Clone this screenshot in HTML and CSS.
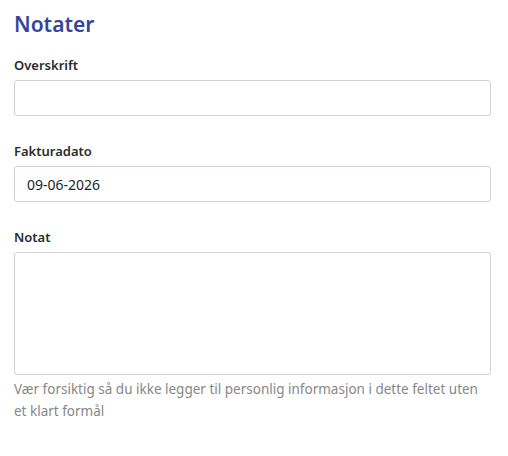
FILE: index.html
```html
<!DOCTYPE html>
<html lang="no">
<head>
    <meta charset="UTF-8">
    <meta name="viewport" content="width=device-width, initial-scale=1.0">
    <title>Notater</title>
    <link rel="stylesheet" href="styles.css">
</head>
<body>
    <div class="container">
        <h1>Notater</h1>
        <form class="notes-form">
            <div class="field">
                <label for="overskrift">Overskrift</label>
                <input type="text" id="overskrift" name="overskrift">
            </div>
            <div class="field">
                <label for="fakturadato">Fakturadato</label>
                <input type="text" id="fakturadato" name="fakturadato" value="09-06-2026">
            </div>
            <div class="field">
                <label for="notat">Notat</label>
                <textarea id="notat" name="notat"></textarea>
                <p class="hint">Vær forsiktig så du ikke legger til personlig informasjon i dette feltet uten et klart formål</p>
            </div>
        </form>
    </div>
</body>
</html>
```

FILE: styles.css
```css
body {
    font-family: "Noto Sans", "Open Sans", sans-serif;
    background-color: #fff;
    color: #212529;
    margin: 0;
    padding: 0;
}
.container {
    padding: 9px 17px 0 14px;
}
h1 {
    margin: 0 0 17px;
    font-size: 21px;
    font-weight: 600;
    line-height: 30px;
    color: #34469a;
}
.field {
    margin-bottom: 26px;
}
label {
    display: block;
    margin-bottom: 6px;
    font-size: 13px;
    font-weight: 600;
    line-height: 18px;
    color: #2b2b2b;
}
input,
textarea {
    display: block;
    box-sizing: border-box;
    width: 100%;
    padding: 6px 12px;
    border: 1px solid #cfd1d8;
    border-radius: 3px;
    font-family: inherit;
    font-size: 14px;
    color: #212529;
    background-color: #fff;
}
input {
    height: 36px;
}
textarea {
    height: 123px;
    resize: none;
}
.hint {
    margin: 3px 0 0;
    padding-right: 10px;
    font-size: 13.5px;
    line-height: 22px;
    color: #878787;
}
```
